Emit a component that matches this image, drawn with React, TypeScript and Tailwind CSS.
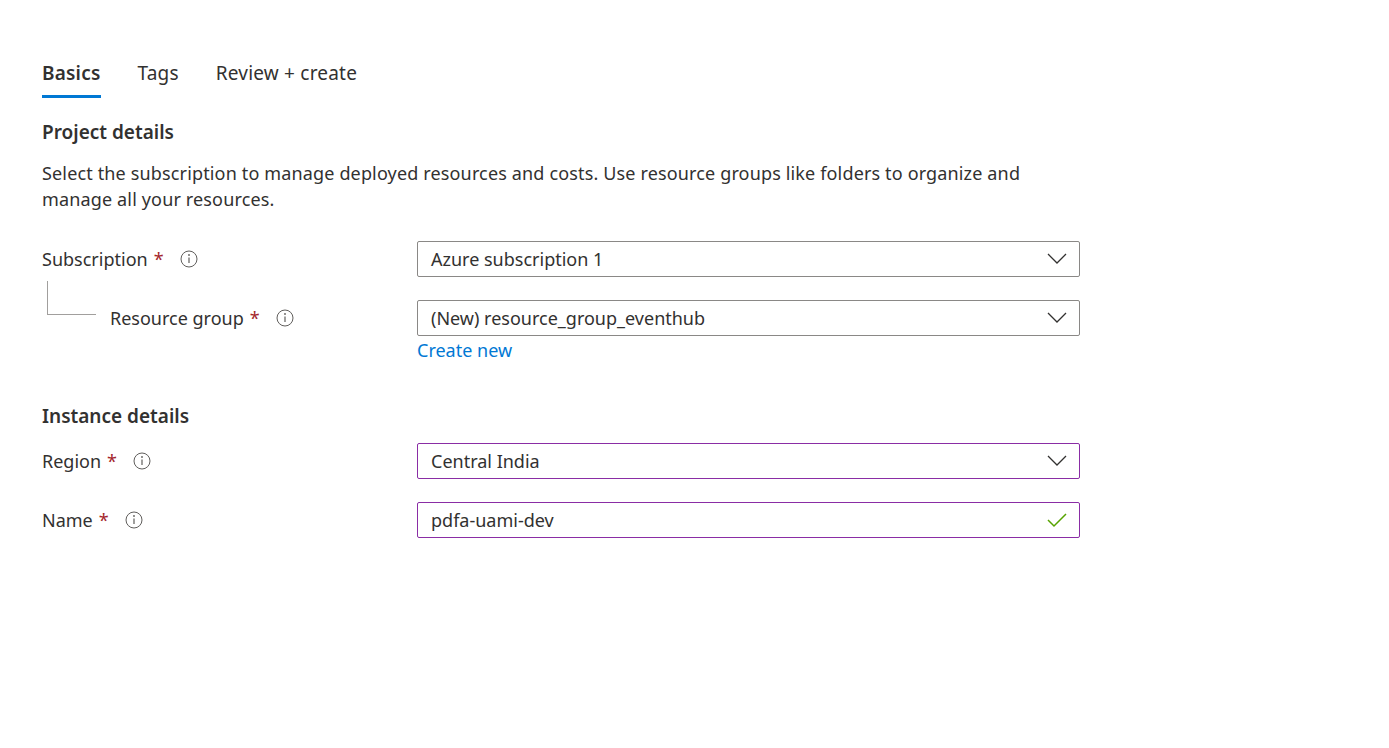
import React from 'react';

const font = "font-['Segoe_UI','Noto_Sans',sans-serif]";

const InfoIcon: React.FC = () => (
  <svg width="18" height="18" viewBox="0 0 18 18" className="shrink-0">
    <circle cx="9" cy="9" r="8" fill="none" stroke="#605e5c" strokeWidth="1" />
    <line x1="9" y1="7.5" x2="9" y2="13" stroke="#605e5c" strokeWidth="1.2" />
    <circle cx="9" cy="5" r="0.9" fill="#605e5c" />
  </svg>
);

const Chevron: React.FC = () => (
  <svg width="20" height="12" viewBox="0 0 20 12">
    <polyline points="1,1 10,10 19,1" fill="none" stroke="#323130" strokeWidth="1.3" />
  </svg>
);

const Check: React.FC = () => (
  <svg width="20" height="16" viewBox="0 0 20 16">
    <polyline points="1,8 7,14 19,2" fill="none" stroke="#57a300" strokeWidth="1.5" />
  </svg>
);

const Label: React.FC<{ text: string }> = ({ text }) => (
  <div className="flex items-center">
    <span>{text}</span>
    <span className="text-[#a4262c] ml-[6px]">*</span>
    <span className="ml-[16px] flex items-center"><InfoIcon /></span>
  </div>
);

const Field: React.FC<{ value: string; purple?: boolean; check?: boolean }> = ({ value, purple, check }) => (
  <div
    className={`w-[663px] h-[36px] border rounded-[2px] flex items-center justify-between pl-[13px] pr-[12px] ${
      purple ? 'border-[#8a2da5]' : 'border-[#8a8886]'
    }`}
  >
    <span>{value}</span>
    {check ? <Check /> : <Chevron />}
  </div>
);

export default function App() {
  return (
    <div className={`w-[1389px] h-[748px] bg-white text-[#323130] text-[18px] ${font} pl-[42px] pt-[57px]`}>
      {/* Tabs */}
      <div className="flex gap-[37px] text-[19px] tracking-[0.2px]">
        <div className="flex flex-col">
          <span className="font-semibold leading-[32px]">Basics</span>
          <div className="h-[3px] bg-[#0078d4] mt-[6px]" />
        </div>
        <span className="leading-[32px]">Tags</span>
        <span className="leading-[32px]">Review + create</span>
      </div>

      <h2 className="font-semibold text-[19px] mt-[19px] leading-[30px]">Project details</h2>
      <p className="mt-[13px] leading-[26px] w-[1010px] tracking-[0.15px]">
        Select the subscription to manage deployed resources and costs. Use resource groups like folders to organize and
        manage all your resources.
      </p>

      <div className="mt-[29px] flex items-center">
        <div className="w-[375px]"><Label text="Subscription" /></div>
        <Field value="Azure subscription 1" />
      </div>

      <div className="mt-[23px] flex items-center">
        <div className="w-[375px] flex items-center">
          <div className="w-[68px] self-stretch relative">
            <div className="absolute left-[5px] top-[-24px] w-[49px] h-[34px] border-l border-b border-[#a19f9d]" />
          </div>
          <Label text="Resource group" />
        </div>
        <Field value="(New) resource_group_eventhub" />
      </div>
      <div className="pl-[375px] mt-[1px]">
        <span className="text-[#0078d4]">Create new</span>
      </div>

      <h2 className="font-semibold text-[19px] mt-[37px] leading-[30px]">Instance details</h2>

      <div className="mt-[12px] flex items-center">
        <div className="w-[375px]"><Label text="Region" /></div>
        <Field value="Central India" purple />
      </div>

      <div className="mt-[23px] flex items-center">
        <div className="w-[375px]"><Label text="Name" /></div>
        <Field value="pdfa-uami-dev" purple check />
      </div>
    </div>
  );
}
